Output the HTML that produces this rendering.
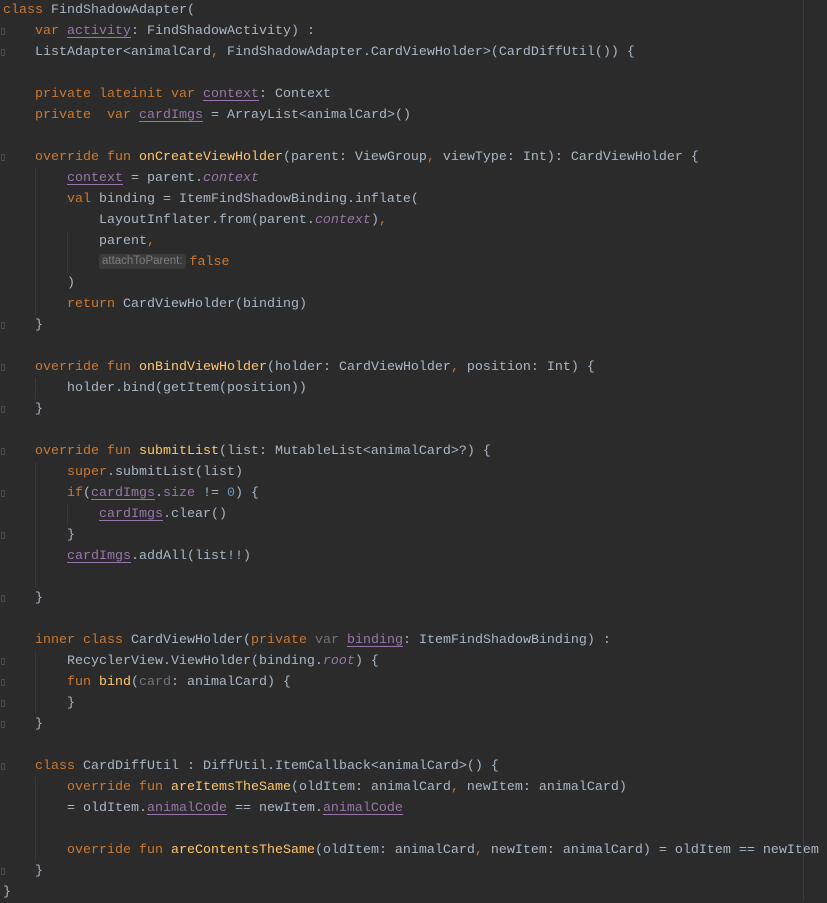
<!DOCTYPE html>
<html><head><meta charset="utf-8"><style>
html,body{margin:0;padding:0;background:#2b2b2b;width:827px;height:901px;overflow:hidden}
#c{position:absolute;left:3px;top:0;font-family:"Liberation Mono",monospace;font-size:13.33px;color:#a9b7c6}
.l{height:21px;line-height:21px;white-space:pre}
.k{color:#cc7832}.p{color:#9876aa}.u{text-decoration:underline;text-underline-offset:3px}
.f{color:#ffc66d}.i{color:#9876aa;font-style:italic}.n{color:#6897bb}.g{color:#72737a}
.h{display:inline-block;background:#3b3b3b;color:#7e7e7e;font-family:"Liberation Sans",sans-serif;font-size:11.5px;line-height:15px;padding:0 3px;border-radius:3px;margin-right:4px;vertical-align:1px}
.m{position:absolute;left:803px;top:0;width:1px;height:901px;background:#3c3c3c}
.v{position:absolute;width:1px;background:#3a3a3a}
.fm{position:absolute;left:1px;width:4px;height:7px;border:1px solid #4a4a4a;box-sizing:border-box}
</style></head><body>
<div class="m"></div>
<div class="v" style="left:35px;top:168px;height:147px"></div>
<div class="v" style="left:67px;top:231px;height:42px"></div>
<div class="v" style="left:35px;top:378px;height:21px"></div>
<div class="v" style="left:35px;top:462px;height:126px"></div>
<div class="v" style="left:67px;top:504px;height:21px"></div>
<div class="v" style="left:35px;top:651px;height:63px"></div>
<div class="v" style="left:35px;top:777px;height:84px"></div>
<div class="fm" style="top:28px"></div><div class="fm" style="top:49px"></div>
<div class="fm" style="top:154px"></div><div class="fm" style="top:322px"></div>
<div class="fm" style="top:364px"></div><div class="fm" style="top:406px"></div>
<div class="fm" style="top:448px"></div><div class="fm" style="top:490px"></div><div class="fm" style="top:532px"></div><div class="fm" style="top:595px"></div>
<div class="fm" style="top:658px"></div><div class="fm" style="top:679px"></div><div class="fm" style="top:700px"></div><div class="fm" style="top:721px"></div>
<div class="fm" style="top:763px"></div><div class="fm" style="top:868px"></div>
<div id="c">
<div class="l"><span class="k">class</span> FindShadowAdapter(</div>
<div class="l">    <span class="k">var</span> <span class="p u">activity</span>: FindShadowActivity) :</div>
<div class="l">    ListAdapter&lt;animalCard<span class="k">,</span> FindShadowAdapter.CardViewHolder&gt;(CardDiffUtil()) {</div>
<div class="l"> </div>
<div class="l">    <span class="k">private lateinit var</span> <span class="p u">context</span>: Context</div>
<div class="l">    <span class="k">private  var</span> <span class="p u">cardImgs</span> = ArrayList&lt;animalCard&gt;()</div>
<div class="l"> </div>
<div class="l">    <span class="k">override fun</span> <span class="f">onCreateViewHolder</span>(parent: ViewGroup<span class="k">,</span> viewType: Int): CardViewHolder {</div>
<div class="l">        <span class="p u">context</span> = parent.<span class="i">context</span></div>
<div class="l">        <span class="k">val</span> binding = ItemFindShadowBinding.inflate(</div>
<div class="l">            LayoutInflater.from(parent.<span class="i">context</span>)<span class="k">,</span></div>
<div class="l">            parent<span class="k">,</span></div>
<div class="l">            <span class="h">attachToParent:</span><span class="k">false</span></div>
<div class="l">        )</div>
<div class="l">        <span class="k">return</span> CardViewHolder(binding)</div>
<div class="l">    }</div>
<div class="l"> </div>
<div class="l">    <span class="k">override fun</span> <span class="f">onBindViewHolder</span>(holder: CardViewHolder<span class="k">,</span> position: Int) {</div>
<div class="l">        holder.bind(getItem(position))</div>
<div class="l">    }</div>
<div class="l"> </div>
<div class="l">    <span class="k">override fun</span> <span class="f">submitList</span>(list: MutableList&lt;animalCard&gt;?) {</div>
<div class="l">        <span class="k">super</span>.submitList(list)</div>
<div class="l">        <span class="k">if</span>(<span class="p u">cardImgs</span>.<span class="p">size</span> != <span class="n">0</span>) {</div>
<div class="l">            <span class="p u">cardImgs</span>.clear()</div>
<div class="l">        }</div>
<div class="l">        <span class="p u">cardImgs</span>.addAll(list!!)</div>
<div class="l"> </div>
<div class="l">    }</div>
<div class="l"> </div>
<div class="l">    <span class="k">inner class</span> CardViewHolder(<span class="k">private</span> <span class="g">var</span> <span class="p u">binding</span>: ItemFindShadowBinding) :</div>
<div class="l">        RecyclerView.ViewHolder(binding.<span class="i">root</span>) {</div>
<div class="l">        <span class="k">fun</span> <span class="f">bind</span>(<span class="g">card</span>: animalCard) {</div>
<div class="l">        }</div>
<div class="l">    }</div>
<div class="l"> </div>
<div class="l">    <span class="k">class</span> CardDiffUtil : DiffUtil.ItemCallback&lt;animalCard&gt;() {</div>
<div class="l">        <span class="k">override fun</span> <span class="f">areItemsTheSame</span>(oldItem: animalCard<span class="k">,</span> newItem: animalCard)</div>
<div class="l">        = oldItem.<span class="p u">animalCode</span> == newItem.<span class="p u">animalCode</span></div>
<div class="l"> </div>
<div class="l">        <span class="k">override fun</span> <span class="f">areContentsTheSame</span>(oldItem: animalCard<span class="k">,</span> newItem: animalCard) = oldItem == newItem</div>
<div class="l">    }</div>
<div class="l">}</div>
</div>
</body></html>
